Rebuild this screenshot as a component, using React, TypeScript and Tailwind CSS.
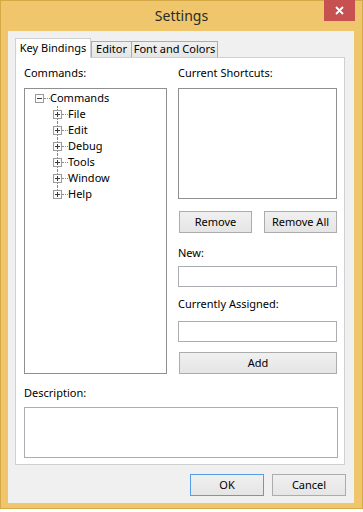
import React from "react";

const font = { fontFamily: '"Noto Sans", "Open Sans", sans-serif' };

function Box({ minus }: { minus?: boolean }) {
  return (
    <svg width="9" height="9" viewBox="0 0 9 9" className="shrink-0 relative z-10 block">
      <rect x="0.5" y="0.5" width="8" height="8" fill="#fcfcfc" stroke="#9a9a9a" />
      <path d="M2 4.5h5" stroke="#3a3a3a" />
      {!minus && <path d="M4.5 2v5" stroke="#3a3a3a" />}
    </svg>
  );
}

function Child({ label, last }: { label: string; last?: boolean }) {
  return (
    <div className="relative h-[16px] flex items-center pl-[28px]">
      <span
        className={
          last
            ? "absolute left-[32px] top-0 h-[8px] border-l border-dotted border-[#8a8a8a]"
            : "absolute left-[32px] top-0 bottom-0 border-l border-dotted border-[#8a8a8a]"
        }
      />
      <Box />
      <span className="w-[6px] border-t border-dotted border-[#8a8a8a]" />
      <span className="leading-[16px]">{label}</span>
    </div>
  );
}

function Btn({ children, className = "" }: { children: React.ReactNode; className?: string }) {
  return (
    <div
      className={
        "h-[22px] flex items-center justify-center border border-[#acacac] bg-gradient-to-b from-[#f0f0f0] to-[#e5e5e5] text-black whitespace-nowrap " +
        className
      }
    >
      {children}
    </div>
  );
}

export default function App() {
  return (
    <div className="w-[363px] h-[512px] bg-white text-[11px] text-black" style={font}>
      <div className="w-[363px] h-[509px] bg-[#efc66c] border border-[#d6a948] flex flex-col">
        {/* Title bar */}
        <div className="relative h-[30px] flex items-center justify-center">
          <span className="text-[14px] text-[#2a2a2a] leading-none -mt-[1px]">Settings</span>
          <div className="absolute top-[-1px] right-[7px] w-[31px] h-[21px] bg-[#c75050] flex items-center justify-center">
            <svg width="9" height="9" viewBox="0 0 9 9">
              <path d="M1 1L8 8M8 1L1 8" stroke="white" strokeWidth="1.8" />
            </svg>
          </div>
        </div>
        {/* Client */}
        <div className="ml-[7px] mr-[8px] h-[472px] bg-[#f0f0f0] flex flex-col pl-[7px] pt-[7px]">
          {/* Tabs */}
          <div className="flex items-end h-[19px] relative z-10 whitespace-nowrap">
            <div className="w-[76px] h-[20px] -mb-[1px] bg-white border border-b-0 border-[#d0d0d0] flex items-center justify-center pb-[1px]">
              Key Bindings
            </div>
            <div className="w-[40px] h-[16px] border border-b-0 border-r-0 border-[#acacac] bg-gradient-to-b from-[#f0f0f0] to-[#e5e5e5] flex items-center justify-center">
              Editor
            </div>
            <div className="w-[87px] h-[16px] border border-b-0 border-[#acacac] bg-gradient-to-b from-[#f0f0f0] to-[#e5e5e5] flex items-center justify-center">
              Font and Colors
            </div>
          </div>
          {/* Pane */}
          <div className="w-[330px] h-[408px] bg-white border border-[#d0d0d0] pl-[8px] pt-[7px] flex flex-col">
            <div className="flex gap-[11px]">
              {/* Left column */}
              <div className="w-[143px] flex flex-col">
                <div className="h-[15px] leading-[15px]">Commands:</div>
                <div className="mt-[8px] h-[286px] border border-[#8f8f8f] pt-[1px]">
                  <div className="h-[16px] flex items-center pl-[10px]">
                    <Box minus />
                    <span className="w-[6px] border-t border-dotted border-[#8a8a8a]" />
                    <span className="leading-[16px]">Commands</span>
                  </div>
                  <Child label="File" />
                  <Child label="Edit" />
                  <Child label="Debug" />
                  <Child label="Tools" />
                  <Child label="Window" />
                  <Child label="Help" last />
                </div>
              </div>
              {/* Right column */}
              <div className="w-[159px] flex flex-col">
                <div className="h-[15px] leading-[15px]">Current Shortcuts:</div>
                <div className="mt-[8px] h-[111px] border border-[#8f8f8f]" />
                <div className="mt-[12px] flex justify-between pl-[1px]">
                  <Btn className="w-[73px]">Remove</Btn>
                  <Btn className="w-[73px]">Remove All</Btn>
                </div>
                <div className="mt-[12px] h-[15px] leading-[15px]">New:</div>
                <div className="mt-[6px] h-[21px] border border-[#abadb3]" />
                <div className="mt-[9px] h-[15px] leading-[15px]">Currently Assigned:</div>
                <div className="mt-[10px] h-[21px] border border-[#abadb3]" />
                <Btn className="mt-[10px] ml-[1px] w-[158px]">Add</Btn>
              </div>
            </div>
            <div className="mt-[11px] h-[15px] leading-[15px]">Description:</div>
            <div className="mt-[7px] w-[314px] h-[51px] border border-[#abadb3]" />
          </div>
          {/* Dialog buttons */}
          <div className="mt-[9px] flex justify-end gap-[8px] pr-[8px]">
            <Btn className="w-[74px] !border-[#569de5]">OK</Btn>
            <Btn className="w-[74px]">Cancel</Btn>
          </div>
        </div>
      </div>
    </div>
  );
}
